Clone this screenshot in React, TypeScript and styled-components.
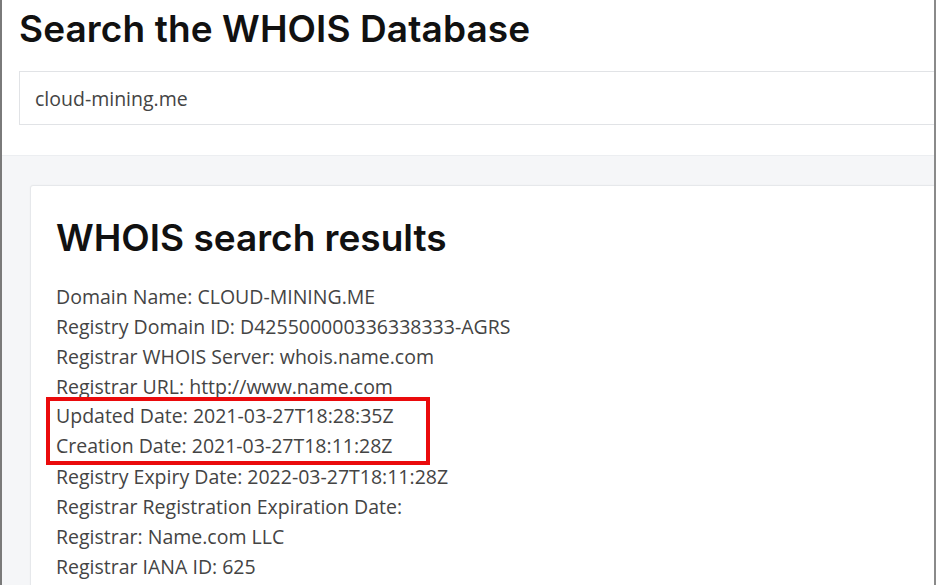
import * as React from 'react';
import styled, { createGlobalStyle } from 'styled-components';

const GlobalStyle = createGlobalStyle`
    html, body {
        margin: 0;
        padding: 0;
        background: #ffffff;
    }
    body {
        font-family: 'Open Sans', 'Liberation Sans', sans-serif;
        overflow: hidden;
    }
`;

const Frame = styled.div`
    width: 936px;
    height: 585px;
    box-sizing: border-box;
    border-left: 2px solid #7a7a7a;
    border-right: 2px solid #8a8a8a;
    overflow: hidden;
    display: flex;
    flex-direction: column;
`;

const SearchArea = styled.section`
    background: #ffffff;
    padding: 6px 0 30px 17px;
    border-bottom: 1px solid #eceef1;
`;

const PageTitle = styled.h1`
    margin: 0 0 19px 0;
    font-family: Inter, 'Liberation Sans', sans-serif;
    font-weight: 600;
    font-size: 37px;
    line-height: 46px;
    color: #111111;
    letter-spacing: 0.1px;
`;

const SearchInput = styled.div`
    height: 52px;
    margin-right: -40px;
    border: 1px solid #e1e3e6;
    display: flex;
    align-items: center;
    padding-left: 15px;
    font-size: 19.5px;
    color: #444444;
`;

const ResultsArea = styled.section`
    flex: 1;
    background: #f5f6f8;
    padding: 29px 0 0 28px;
`;

const Card = styled.div`
    background: #ffffff;
    height: 100%;
    margin-right: -40px;
    border: 1px solid #e6e8eb;
    border-radius: 3px;
    padding: 28px 0 0 25px;
    box-shadow: 0 0 2px rgba(0, 0, 0, 0.04);
`;

const CardTitle = styled.h2`
    margin: 0 0 20px;
    font-family: Inter, 'Liberation Sans', sans-serif;
    font-weight: 600;
    font-size: 37px;
    line-height: 48px;
    color: #111111;
`;

const Lines = styled.div`
    display: flex;
    flex-direction: column;
    align-items: flex-start;
`;

const Line = styled.div`
    font-size: 19.5px;
    line-height: 30px;
    color: #444444;
    white-space: nowrap;
`;

const Highlight = styled.div`
    border: 4px solid #ea0a0c;
    margin: -5px 0 -3px -10px;
    padding: 0 32px 0 6px;
`;

const before = [
    'Domain Name: CLOUD-MINING.ME',
    'Registry Domain ID: D425500000336338333-AGRS',
    'Registrar WHOIS Server: whois.name.com',
    'Registrar URL: http://www.name.com',
];

const marked = [
    'Updated Date: 2021-03-27T18:28:35Z',
    'Creation Date: 2021-03-27T18:11:28Z',
];

const after = [
    'Registry Expiry Date: 2022-03-27T18:11:28Z',
    'Registrar Registration Expiration Date:',
    'Registrar: Name.com LLC',
    'Registrar IANA ID: 625',
];

export default function App() {
    return (
        <>
            <GlobalStyle />
            <Frame>
                <SearchArea>
                    <PageTitle>Search the WHOIS Database</PageTitle>
                    <SearchInput>cloud-mining.me</SearchInput>
                </SearchArea>
                <ResultsArea>
                    <Card>
                        <CardTitle>WHOIS search results</CardTitle>
                        <Lines>
                            {before.map(t => <Line key={t}>{t}</Line>)}
                            <Highlight>
                                {marked.map(t => <Line key={t}>{t}</Line>)}
                            </Highlight>
                            {after.map(t => <Line key={t}>{t}</Line>)}
                        </Lines>
                    </Card>
                </ResultsArea>
            </Frame>
        </>
    );
}
